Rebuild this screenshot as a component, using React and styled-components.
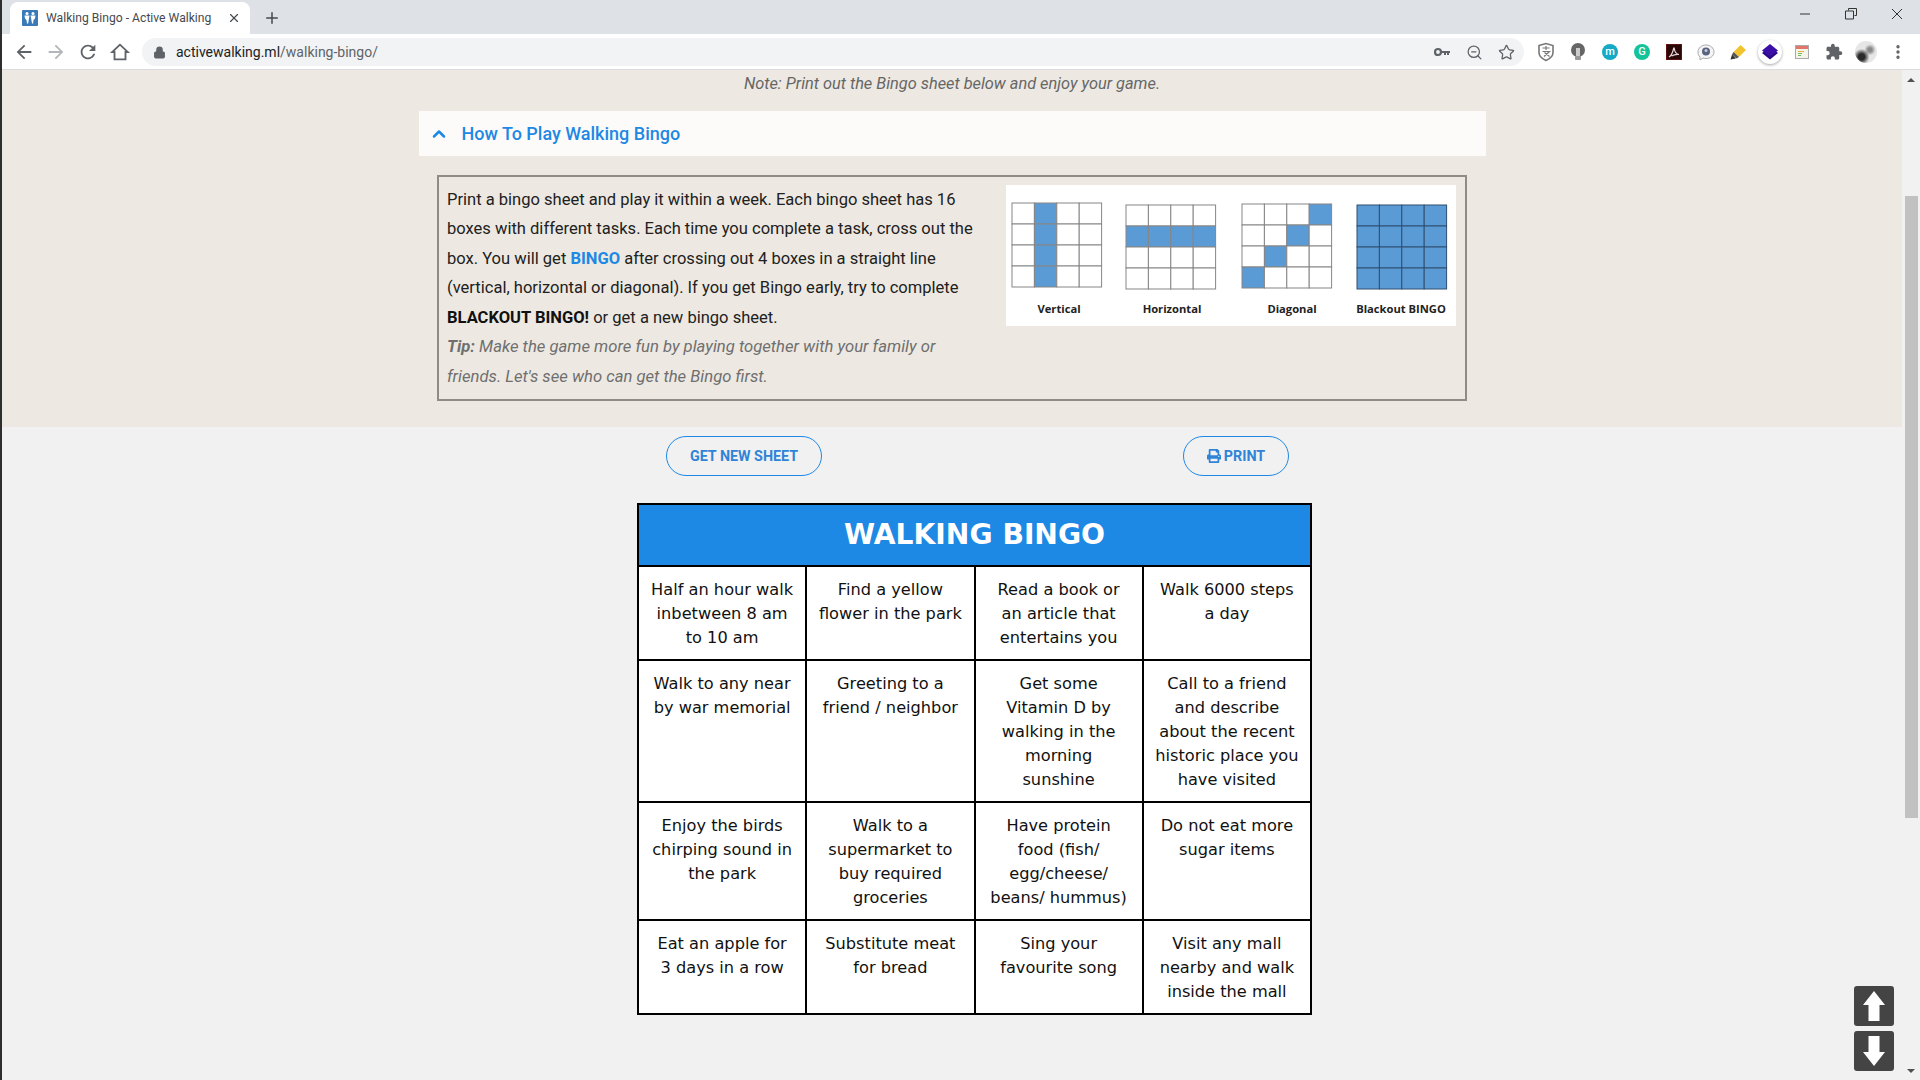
import React from "react";
import styled, { createGlobalStyle } from "styled-components";
import { ChevronUp, ZoomOut, Star, X, Plus, Lock, EllipsisVertical } from "lucide-react";
import { FaPrint } from "react-icons/fa";
import { MdExtension } from "react-icons/md";

const GlobalStyle = createGlobalStyle`
  html, body {
    margin: 0;
    height: 100%;
    overflow: hidden;
    background: #f1f1f1;
    font-family: Roboto, "Liberation Sans", sans-serif;
  }
`;

const bingoRows = [
  ["Half an hour walk inbetween 8 am to 10 am", "Find a yellow flower in the park", "Read a book or an article that entertains you", "Walk 6000 steps a day"],
  ["Walk to any near by war memorial", "Greeting to a friend / neighbor", "Get some Vitamin D by walking in the morning sunshine", "Call to a friend and describe about the recent historic place you have visited"],
  ["Enjoy the birds chirping sound in the park", "Walk to a supermarket to buy required groceries", "Have protein food (fish/ egg/cheese/ beans/ hummus)", "Do not eat more sugar items"],
  ["Eat an apple for 3 days in a row", "Substitute meat for bread", "Sing your favourite song", "Visit any mall nearby and walk inside the mall"],
];

const patterns = [
  { label: "Vertical", x: 6, y: 18, labelX: 53, filled: [1, 5, 9, 13], line: "#858585" },
  { label: "Horizontal", x: 120, y: 20, labelX: 166, filled: [4, 5, 6, 7], line: "#858585" },
  { label: "Diagonal", x: 236, y: 19, labelX: 286, filled: [3, 6, 9, 12], line: "#858585" },
  { label: "Blackout BINGO", x: 351, y: 20, labelX: 395, filled: [0, 1, 2, 3, 4, 5, 6, 7, 8, 9, 10, 11, 12, 13, 14, 15], line: "#2f4f70" },
];

function PatternImage() {
  return (
    <PatternSvg width="450" height="141" viewBox="0 0 450 141">
      <rect width="450" height="141" fill="#fff" />
      {patterns.map((p) => (
        <g key={p.label}>
          {Array.from({ length: 16 }, (_, i) => (
            <rect
              key={i}
              x={p.x + (i % 4) * 22.4}
              y={p.y + Math.floor(i / 4) * 21}
              width="22.4"
              height="21"
              fill={p.filled.includes(i) ? "#5b9bd5" : "#fff"}
              stroke={p.line}
              strokeWidth="1"
            />
          ))}
          <PatternLabel x={p.labelX} y="128" textAnchor="middle">
            {p.label}
          </PatternLabel>
        </g>
      ))}
    </PatternSvg>
  );
}

function ExtensionIcons() {
  return (
    <>
      <ToolSlot>
        <svg width="18" height="20" viewBox="0 0 18 20">
          <path d="M2 3.500 9 1.500l7 2v7c0 4-3.500 6.500-7 8-3.500-1.500-7-4-7-8z" fill="#fff" stroke="#777" strokeWidth="1.600" />
          <path d="M5.500 6h7M9 4v4M5.500 9.500h7L7 14.500M7.500 10.500l5 4" fill="none" stroke="#777" strokeWidth="1.200" />
        </svg>
      </ToolSlot>
      <ToolSlot>
        <svg width="16" height="20" viewBox="0 0 16 20">
          <circle cx="8" cy="8" r="7" fill="#666" />
          <rect x="6" y="6" width="4" height="8" fill="#ccc" />
          <rect x="5" y="14" width="6" height="4" rx="1" fill="#999" />
        </svg>
      </ToolSlot>
      <ToolSlot>
        <Badge $bg="#14a9c4">m</Badge>
      </ToolSlot>
      <ToolSlot>
        <Badge $bg="#15c39a">G</Badge>
      </ToolSlot>
      <ToolSlot>
        <svg width="16" height="16" viewBox="0 0 16 16">
          <rect width="16" height="16" fill="#2a0808" stroke="#8c1c1c" />
          <path d="M3 13c2-1 3.500-4 4.500-8 .2-1.500.8-1.500.9 0 .3 3 2 5 4.600 5.500-2.500-.3-5.500.3-7.500 1.500" fill="none" stroke="#e6d8d8" strokeWidth="1.200" />
        </svg>
      </ToolSlot>
      <ToolSlot>
        <svg width="18" height="18" viewBox="0 0 18 18">
          <path d="M3 14c-1.500-1.300-2-3-2-5 0-4 3.500-7 8-7s8 3 8 7-3.500 6.500-8 6.500c-1 0-2-.1-3-.5l-3 2z" fill="#f4f4f6" stroke="#aaa" />
          <circle cx="9" cy="8.500" r="4" fill="#5a6280" />
          <circle cx="9" cy="7.500" r="1.500" fill="#c6cad8" />
        </svg>
      </ToolSlot>
      <ToolSlot>
        <svg width="18" height="18" viewBox="0 0 18 18">
          <path d="M4.500 9 11.500 2 17 7l-7 7z" fill="#f3c32f" />
          <path d="M4.500 9l5.500 5-2.500 1.500-4.500-4z" fill="#555" />
          <path d="M3 11.500l4 4-5.500 1z" fill="#333" />
        </svg>
      </ToolSlot>
      <ToolSlot>
        <ActiveRing>
          <svg width="16" height="16" viewBox="0 0 16 16">
            <path d="M8 0 16 6.500 8 13 0 6.500z" fill="#3b0fa8" />
            <path d="M0 9l8 6.500L16 9l-2-1.600L8 12.300 2 7.400z" fill="#2c0a86" />
          </svg>
        </ActiveRing>
      </ToolSlot>
      <ToolSlot>
        <svg width="14" height="14" viewBox="0 0 14 14">
          <rect x=".5" y=".5" width="13" height="13" fill="#f6f3e8" stroke="#aaa" />
          <rect x="1" y="1" width="12" height="3" fill="#e2766a" />
          <path d="M3 6.500h6" stroke="#e0b23c" />
          <path d="M3 8.500h4" stroke="#6cbb5a" />
          <path d="M3 10.500h3" stroke="#6cbb5a" />
        </svg>
      </ToolSlot>
      <ToolSlot>
        <MdExtension size={18} color="#5f6368" />
      </ToolSlot>
      <ToolSlot>
        <Avatar />
      </ToolSlot>
    </>
  );
}

export default function App() {
  return (
    <>
      <GlobalStyle />
      <Screen>
        <WindowEdge />
        <Browser>
          <TabStrip>
            <Tab>
              <Favicon>
                <svg width="14" height="14" viewBox="0 0 14 14" fill="#fff">
                  <circle cx="4" cy="2.500" r="1.500" />
                  <circle cx="10" cy="2.500" r="1.500" />
                  <path d="M1.500 4.500h5l-.7 4-.6 4H4L3.500 9 2 7.500zM7.500 4.500h5L12 7.500 10.500 9l-.4 3.500H9l-.7-4z" />
                </svg>
              </Favicon>
              <TabTitle>Walking Bingo - Active Walking</TabTitle>
              <X size={14} strokeWidth={2} color="#45494e" />
            </Tab>
            <NewTab>
              <Plus size={18} strokeWidth={2} color="#45494e" />
            </NewTab>
            <WindowControls>
              <WindowButton>
                <svg width="12" height="12" viewBox="0 0 12 12">
                  <path d="M1 6h10" stroke="#333" />
                </svg>
              </WindowButton>
              <WindowButton>
                <svg width="12" height="12" viewBox="0 0 12 12">
                  <path d="M3.500 2.500V.500h8v7h-2M.500 3h8v8h-8z" fill="none" stroke="#333" />
                </svg>
              </WindowButton>
              <WindowButton>
                <svg width="12" height="12" viewBox="0 0 12 12">
                  <path d="M1 1l10 10M11 1 1 11" stroke="#333" />
                </svg>
              </WindowButton>
            </WindowControls>
          </TabStrip>
          <Toolbar>
            <NavGroup>
              <NavIcon viewBox="0 0 24 24" fill="#5f6368">
                <path d="M20 11H7.830l5.590-5.590L12 4l-8 8 8 8 1.410-1.410L7.830 13H20v-2z" />
              </NavIcon>
              <NavIcon viewBox="0 0 24 24" fill="#b4b6b9">
                <path d="M12 4l-1.410 1.410L16.170 11H4v2h12.170l-5.580 5.590L12 20l8-8z" />
              </NavIcon>
              <NavIcon viewBox="0 0 24 24" fill="#5f6368">
                <path d="M17.650 6.350C16.200 4.900 14.210 4 12 4c-4.420 0-7.990 3.580-7.990 8s3.570 8 7.990 8c3.730 0 6.840-2.550 7.730-6h-2.080c-.82 2.330-3.040 4-5.650 4-3.310 0-6-2.690-6-6s2.690-6 6-6c1.660 0 3.140.69 4.220 1.780L13 11h7V4l-2.350 2.350z" />
              </NavIcon>
              <NavIcon viewBox="0 0 24 24" fill="none" stroke="#5f6368" strokeWidth="2">
                <path d="M12 4 3.500 12H6v8h12v-8h2.500z" />
              </NavIcon>
            </NavGroup>
            <Omnibox>
              <Lock size={13} fill="#5f6368" color="#5f6368" strokeWidth={2} />
              <Url>
                activewalking.ml<UrlPath>/walking-bingo/</UrlPath>
              </Url>
              <OmniActions>
                <ToolSlot>
                  <svg width="16" height="10" viewBox="0 0 16 10">
                    <circle cx="4" cy="5" r="3" fill="none" stroke="#5f6368" strokeWidth="2.200" />
                    <path d="M7 4h9v2h-1v2h-2V6h-1v2h-2V6H7z" fill="#5f6368" />
                  </svg>
                </ToolSlot>
                <ToolSlot>
                  <ZoomOut size={17} color="#5f6368" strokeWidth={1.800} />
                </ToolSlot>
                <ToolSlot>
                  <Star size={17} color="#5f6368" strokeWidth={1.800} />
                </ToolSlot>
              </OmniActions>
            </Omnibox>
            <Extensions>
              <ExtensionIcons />
              <ToolSlot>
                <EllipsisVertical size={18} color="#5f6368" strokeWidth={2.500} />
              </ToolSlot>
            </Extensions>
          </Toolbar>
          <Viewport>
            <Page>
              <Band>
                <Note>Note: Print out the Bingo sheet below and enjoy your game.</Note>
                <AccordionHeader>
                  <ChevronUp size={20} color="#1e88e5" strokeWidth={3} />
                  <AccordionTitle>How To Play Walking Bingo</AccordionTitle>
                </AccordionHeader>
                <RulesBox>
                  <RulesText>
                    <p>
                      Print a bingo sheet and play it within a week. Each bingo sheet has 16 boxes with different tasks. Each time you complete a task, cross out the box. You will get <Highlight>BINGO</Highlight> after crossing out 4 boxes in a straight line (vertical, horizontal or diagonal). If you get Bingo early, try to complete <strong>BLACKOUT BINGO!</strong> or get a new bingo sheet.
                    </p>
                    <Tip>
                      <strong>Tip:</strong> Make the game more fun by playing together with your family or friends. Let's see who can get the Bingo first.
                    </Tip>
                  </RulesText>
                  <PatternImage />
                </RulesBox>
              </Band>
              <Actions>
                <PillButton $width={156}>GET NEW SHEET</PillButton>
                <PillButton $width={106}>
                  <FaPrint size={14} />
                  PRINT
                </PillButton>
              </Actions>
              <BingoTable>
                <thead>
                  <tr>
                    <BingoTitle colSpan={4}>WALKING BINGO</BingoTitle>
                  </tr>
                </thead>
                <tbody>
                  {bingoRows.map((row) => (
                    <tr key={row[0]}>
                      {row.map((task) => (
                        <BingoCell key={task}>{task}</BingoCell>
                      ))}
                    </tr>
                  ))}
                </tbody>
              </BingoTable>
              <JumpButtons>
                <JumpButton>
                  <svg width="40" height="40" viewBox="0 0 40 40">
                    <path d="M20 5 31 19h-5.500v16h-11V19H9z" fill="#fff" />
                  </svg>
                </JumpButton>
                <JumpButton>
                  <svg width="40" height="40" viewBox="0 0 40 40">
                    <path d="M20 35 9 21h5.500V5h11v16H31z" fill="#fff" />
                  </svg>
                </JumpButton>
              </JumpButtons>
            </Page>
            <Scrollbar>
              <ScrollArrow $up />
              <ScrollThumb />
              <ScrollArrow />
            </Scrollbar>
          </Viewport>
        </Browser>
      </Screen>
    </>
  );
}

const Screen = styled.div`
  display: flex;
  width: 1920px;
  height: 1080px;
  overflow: hidden;
`;

const WindowEdge = styled.div`
  width: 2px;
  background: #2e2e2e;
  flex-shrink: 0;
`;

const Browser = styled.div`
  flex: 1;
  display: flex;
  flex-direction: column;
  min-width: 0;
`;

const TabStrip = styled.div`
  height: 34px;
  background: #dee1e6;
  display: flex;
  align-items: flex-end;
  padding-left: 8px;
  flex-shrink: 0;
`;

const Tab = styled.div`
  width: 240px;
  height: 32px;
  box-sizing: border-box;
  background: #fff;
  border-radius: 8px 8px 0 0;
  display: flex;
  align-items: center;
  padding: 0 9px 0 12px;
`;

const Favicon = styled.div`
  width: 16px;
  height: 16px;
  background: #3a7ab8;
  border-radius: 1px;
  display: flex;
  align-items: center;
  justify-content: center;
  margin-right: 8px;
  flex-shrink: 0;
`;

const TabTitle = styled.span`
  flex: 1;
  font-family: Roboto, sans-serif;
  font-size: 12.15px;
  color: #45494e;
  white-space: nowrap;
`;

const NewTab = styled.div`
  width: 28px;
  height: 32px;
  margin-left: 8px;
  display: flex;
  align-items: center;
  justify-content: center;
`;

const WindowControls = styled.div`
  margin-left: auto;
  align-self: flex-start;
  display: flex;
  padding: 8px 0 0 0;
`;

const WindowButton = styled.div`
  width: 46px;
  height: 12px;
  display: flex;
  justify-content: center;
`;

const Toolbar = styled.div`
  height: 36px;
  box-sizing: border-box;
  background: #fff;
  border-bottom: 1px solid #d9dbdf;
  display: flex;
  align-items: center;
  padding-top: 1px;
  flex-shrink: 0;
`;

const NavGroup = styled.div`
  width: 140px;
  padding-left: 11px;
  box-sizing: border-box;
  display: flex;
  gap: 10px;
  flex-shrink: 0;
`;

const NavIcon = styled.svg`
  width: 22px;
  height: 22px;
`;

const Omnibox = styled.div`
  width: 1382px;
  height: 28px;
  background: #f1f3f4;
  border-radius: 14px;
  display: flex;
  align-items: center;
  padding-left: 11px;
  box-sizing: border-box;
  flex-shrink: 0;
`;

const Url = styled.span`
  margin-left: 10px;
  font-family: Roboto, sans-serif;
  font-size: 14px;
  color: #202124;
`;

const UrlPath = styled.span`
  color: #5f6368;
`;

const OmniActions = styled.div`
  margin-left: auto;
  display: flex;
  padding-right: 2px;
`;

const Extensions = styled.div`
  display: flex;
  margin-left: 6px;
`;

const ToolSlot = styled.div`
  width: 32px;
  height: 28px;
  display: flex;
  align-items: center;
  justify-content: center;
`;

const Badge = styled.div`
  width: 16px;
  height: 16px;
  border-radius: 50%;
  background: ${(p) => p.$bg};
  color: #fff;
  font-family: Roboto, sans-serif;
  font-size: 11px;
  font-weight: 500;
  line-height: 15px;
  text-align: center;
`;

const ActiveRing = styled.div`
  width: 24px;
  height: 24px;
  border-radius: 50%;
  background: #fff;
  box-shadow: 0 1px 3px rgba(0, 0, 0, 0.35);
  display: flex;
  align-items: center;
  justify-content: center;
`;

const Avatar = styled.div`
  width: 22px;
  height: 22px;
  border-radius: 50%;
  background: radial-gradient(circle at 30% 72%, #2a2a2a 0 14%, transparent 36%),
    radial-gradient(circle at 68% 40%, #8a8a8a 0 10%, transparent 28%), #e6e6e6;
`;

const Viewport = styled.div`
  flex: 1;
  display: flex;
  min-height: 0;
`;

const Page = styled.main`
  flex: 1;
  min-width: 0;
  background: #f1f1f1;
  position: relative;
`;

const Band = styled.section`
  height: 357px;
  box-sizing: border-box;
  background: #ede9e2;
  display: flex;
  flex-direction: column;
  align-items: center;
`;

const Note = styled.div`
  height: 28px;
  margin-bottom: 13px;
  font-size: 16.35px;
  font-style: italic;
  line-height: 28px;
  color: #666;
`;

const AccordionHeader = styled.div`
  width: 1067px;
  height: 45px;
  box-sizing: border-box;
  background: #fcfbf9;
  padding-left: 10px;
  display: flex;
  align-items: center;
`;

const AccordionTitle = styled.span`
  margin-left: 13px;
  font-size: 18px;
  font-weight: 500;
  color: #1e88e5;
`;

const RulesBox = styled.div`
  width: 1030px;
  height: 226px;
  margin-top: 19px;
  box-sizing: border-box;
  border: 2px solid #8f8b85;
  padding: 8px 9px 8px 8px;
  display: flex;
  justify-content: space-between;
`;

const RulesText = styled.div`
  width: 535px;
  font-size: 16.55px;
  line-height: 29.44px;
  color: #212121;
  p {
    margin: 0;
  }
  strong {
    color: #111;
  }
`;

const Highlight = styled.span`
  color: #1e88e5;
  font-weight: 700;
`;

const Tip = styled.p`
  font-size: 16.65px;
  font-style: italic;
  color: #6f6f6f;
  padding-right: 20px;
  && strong {
    color: #6f6f6f;
  }
`;

const PatternSvg = styled.svg`
  flex-shrink: 0;
  display: block;
`;

const PatternLabel = styled.text`
  font-family: "Open Sans", sans-serif;
  font-size: 11.2px;
  font-weight: 700;
  fill: #222;
`;

const Actions = styled.div`
  margin: 9px 613px 0 664px;
  display: flex;
  justify-content: space-between;
`;

const PillButton = styled.button`
  width: ${(p) => p.$width}px;
  height: 40px;
  box-sizing: border-box;
  border: 1px solid #1e88e5;
  border-radius: 20px;
  background: transparent;
  color: #2f84d8;
  font-family: Roboto, sans-serif;
  font-size: 14.3px;
  font-weight: 700;
  display: flex;
  align-items: center;
  justify-content: center;
  gap: 3px;
  padding: 0;
`;

const BingoTable = styled.table`
  width: 675px;
  margin: 27px 0 0 635px;
  table-layout: fixed;
  border-collapse: collapse;
  background: #fff;
  font-family: "DejaVu Sans", Verdana, sans-serif;
`;

const BingoTitle = styled.th`
  height: 60px;
  padding: 0;
  border: 2px solid #000;
  background: #1e88e5;
  color: #fff;
  font-size: 28.2px;
  font-weight: 700;
  line-height: 30px;
  text-align: center;
`;

const BingoCell = styled.td`
  padding: 11px 11px 9px;
  border: 2px solid #000;
  font-size: 16.2px;
  line-height: 24px;
  color: #111;
  text-align: center;
  vertical-align: top;
`;

const JumpButtons = styled.div`
  position: absolute;
  right: 8px;
  bottom: 9px;
  display: flex;
  flex-direction: column;
  gap: 5px;
`;

const JumpButton = styled.div`
  width: 40px;
  height: 40px;
  border-radius: 3px;
  background: #444;
  display: flex;
`;

const Scrollbar = styled.div`
  width: 18px;
  background: #f1f1f1;
  display: flex;
  flex-direction: column;
  align-items: center;
  flex-shrink: 0;
`;

const ScrollArrow = styled.div`
  width: 0;
  height: 0;
  border-left: 4px solid transparent;
  border-right: 4px solid transparent;
  ${(p) => (p.$up ? "border-bottom: 4px solid #505050; margin-top: 8px;" : "border-top: 4px solid #505050; margin-top: auto; margin-bottom: 7px;")}
`;

const ScrollThumb = styled.div`
  width: 13px;
  height: 622px;
  margin-top: 114px;
  background: #c1c1c1;
`;
